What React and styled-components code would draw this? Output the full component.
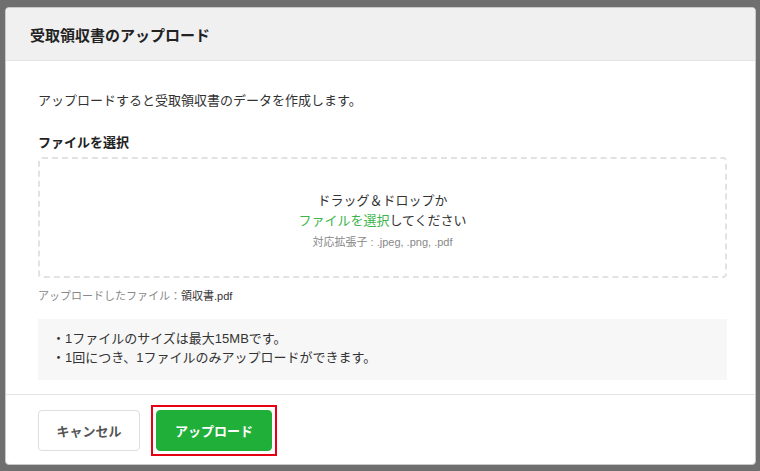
import styled, { createGlobalStyle } from "styled-components"

const GlobalStyle = createGlobalStyle`
  html, body {
    margin: 0;
    padding: 0;
    background: #6f6f6f;
  }
  body {
    font-family: "Liberation Sans", "Noto Sans CJK JP", sans-serif;
    color: #333;
  }
  * { box-sizing: border-box; }
`

const Frame = styled.div`
  width: 760px;
  height: 471px;
  padding: 7px 4px 6px 5px;
  background: #6f6f6f;
`

const Modal = styled.section`
  height: 100%;
  background: #fff;
  border: 1px solid #c9c9c9;
  border-radius: 4px;
  overflow: hidden;
  display: flex;
  flex-direction: column;
`

const Header = styled.header`
  height: 53px;
  background: #f0f0f0;
  border-bottom: 1px solid #e4e4e4;
  display: flex;
  align-items: center;
  padding-left: 24px;
`

const Title = styled.h2`
  margin: 0;
  font-size: 15px;
  font-weight: 700;
  color: #222;
`

const Body = styled.div`
  flex: 1;
  padding: 30px 28px 0 32px;
  display: flex;
  flex-direction: column;
`

const Lead = styled.p`
  margin: 0;
  font-size: 13px;
  line-height: 20px;
`

const Label = styled.h3`
  margin: 22px 0 4px;
  font-size: 13px;
  line-height: 20px;
  font-weight: 700;
  color: #222;
`

const DropZone = styled.div`
  height: 121px;
  border: 2px dashed #e2e2e2;
  border-radius: 4px;
  display: flex;
  flex-direction: column;
  align-items: center;
  justify-content: center;
  padding-top: 6px;
`

const DropLine = styled.div`
  font-size: 13px;
  line-height: 20px;
  color: #333;
`

const Link = styled.span`
  color: #3cb54b;
`

const Formats = styled.div`
  margin-top: 3px;
  font-size: 11px;
  line-height: 16px;
  color: #888;
`

const Uploaded = styled.p`
  margin: 10px 0 0;
  font-size: 11px;
  line-height: 16px;
  color: #888;
`

const FileName = styled.span`
  color: #333;
`

const Notes = styled.ul`
  list-style: none;
  margin: 15px 0 0;
  padding: 10px 14px;
  background: #f7f7f7;
  height: 61px;
`

const Note = styled.li`
  font-size: 13px;
  line-height: 19px;
`

const Footer = styled.footer`
  margin-top: auto;
  border-top: 1px solid #e4e4e4;
  height: 70px;
  padding: 15px 0 0 32px;
  display: flex;
  align-items: flex-start;
  gap: 16px;
`

const Button = styled.button`
  height: 41px;
  width: ${p => p.$w}px;
  border-radius: 4px;
  font-family: inherit;
  font-size: 13px;
  font-weight: 700;
  cursor: pointer;
  border: 1px solid ${p => (p.$primary ? "#20b03a" : "#dedede")};
  background: ${p => (p.$primary ? "#20b03a" : "#fff")};
  color: ${p => (p.$primary ? "#fff" : "#555")};
`

const Highlight = styled.span`
  display: inline-flex;
  margin: -5px;
  padding: 3px;
  border: 2px solid #e60012;
`

export default function App() {
  return (
    <>
      <GlobalStyle />
      <Frame>
        <Modal>
          <Header>
            <Title>受取領収書のアップロード</Title>
          </Header>
          <Body>
            <Lead>アップロードすると受取領収書のデータを作成します。</Lead>
            <Label>ファイルを選択</Label>
            <DropZone>
              <DropLine>ドラッグ＆ドロップか</DropLine>
              <DropLine><Link>ファイルを選択</Link>してください</DropLine>
              <Formats>対応拡張子 : .jpeg, .png, .pdf</Formats>
            </DropZone>
            <Uploaded>アップロードしたファイル：<FileName>領収書.pdf</FileName></Uploaded>
            <Notes>
              <Note>・1ファイルのサイズは最大15MBです。</Note>
              <Note>・1回につき、1ファイルのみアップロードができます。</Note>
            </Notes>
          </Body>
          <Footer>
            <Button $w={102}>キャンセル</Button>
            <Highlight>
              <Button $w={116} $primary>アップロード</Button>
            </Highlight>
          </Footer>
        </Modal>
      </Frame>
    </>
  )
}
